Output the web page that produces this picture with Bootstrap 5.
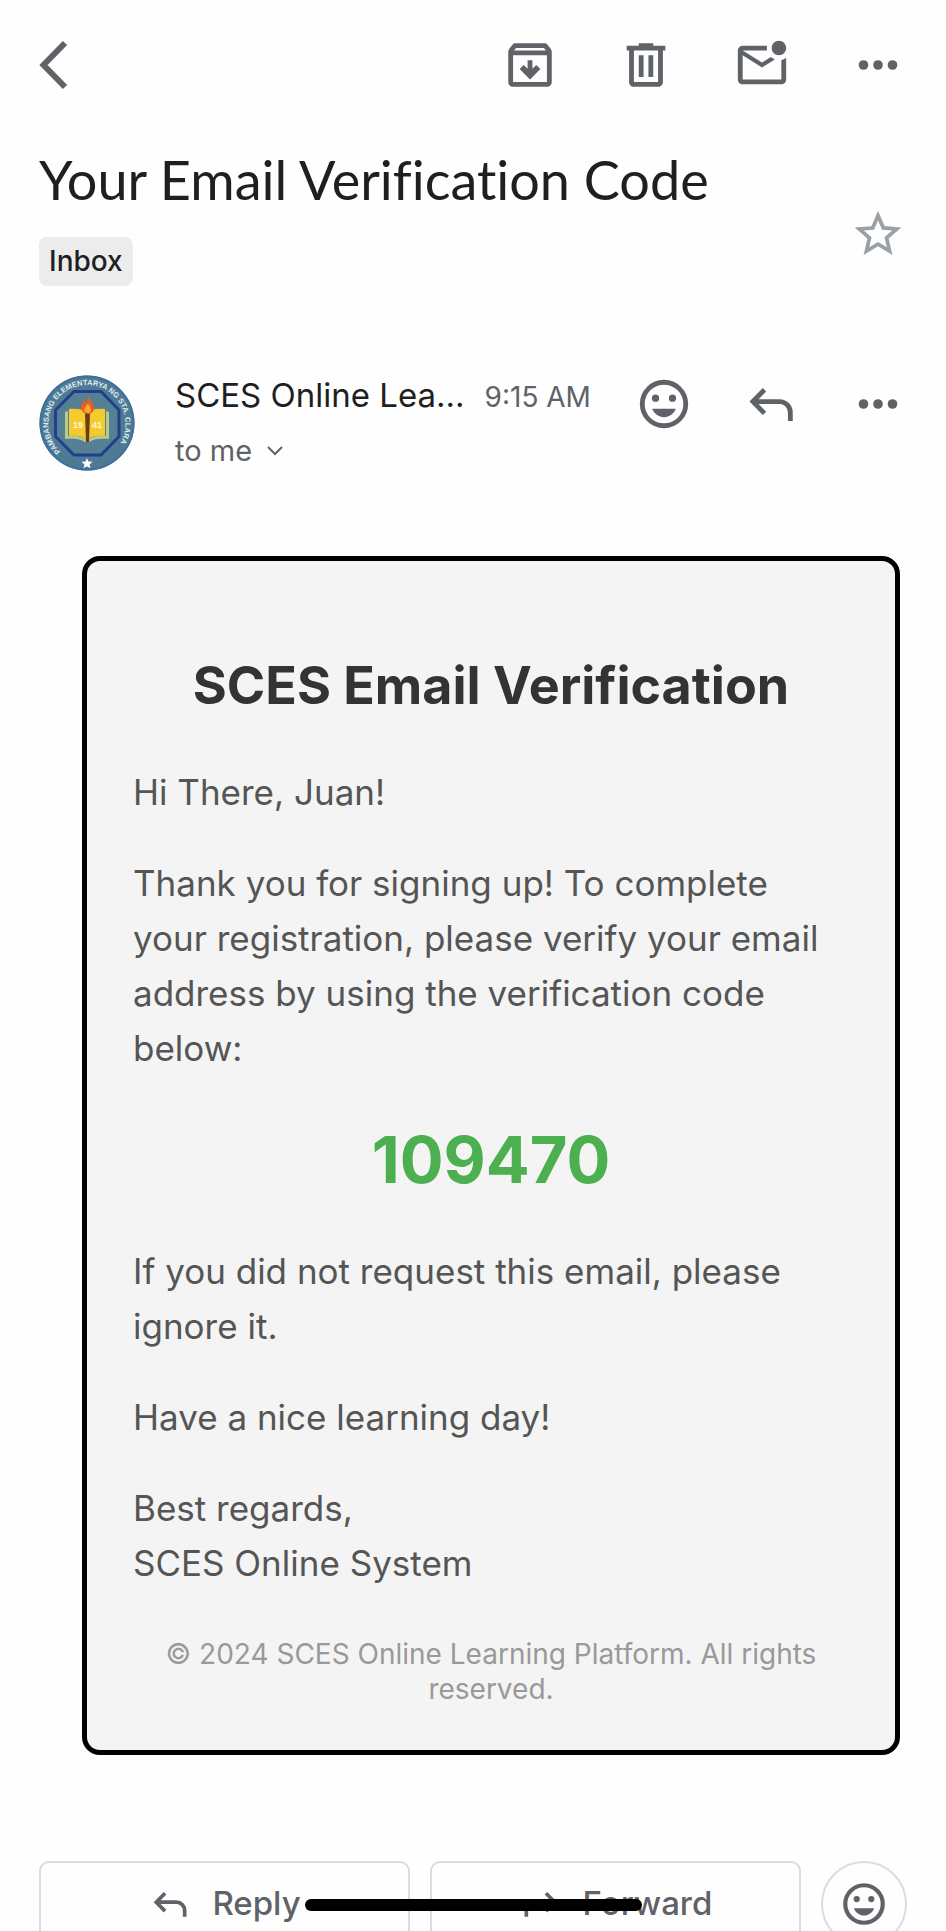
<!DOCTYPE html>
<html lang="en">
<head>
<meta charset="utf-8">
<meta name="viewport" content="width=device-width, initial-scale=1">
<title>Your Email Verification Code</title>
<link href="https://cdn.jsdelivr.net/npm/bootstrap@5.3.0/dist/css/bootstrap.min.css" rel="stylesheet">
<style>
  body { font-family: Inter, "Liberation Sans", sans-serif; background: #fefefe; color: #1f1f1f; }
  .mail-screen { padding: 36px 39px 0; }
  .icon-btn { border: 0; padding: 0; background: none; color: #5f6368; line-height: 0; flex: none; }
  .tool-gap { gap: 58px; }
  .reply-gap { gap: 49px; }
  .subject-row { margin-top: 54px; }
  .subject { font-family: Lato, "Liberation Sans", sans-serif; font-size: 54px; line-height: 64px; font-weight: 400; font-variant-ligatures: none; }
  .folder-tag { margin-top: 25px; padding: 0 10px; height: 49px; line-height: 49px; font-size: 28px; font-weight: 500; background: #ececec; border-radius: 8px; color: #1f1f1f; }
  .star-btn { color: #9aa0a6; margin-bottom: 24px; }
  .sender-row { margin-top: 89px; }
  .sender-text { margin-left: 40px; line-height: 40px; }
  .sender-name { font-size: 33px; }
  .sent-time { font-size: 28px; color: #5f6368; margin-left: 20px; }
  .recipient { border: 0; padding: 0; background: none; margin-top: 14px; font-size: 29px; line-height: 40px; color: #5f6368; gap: 14px; }
  .letter { margin: 85px 7px 0 43px; padding: 84px 46px 43px; border: 5px solid #000; border-radius: 18px; background: #f4f4f4; color: #555; font-size: 35px; line-height: 55px; }
  .letter p { margin-bottom: 36px; }
  .letter h2 { font-size: 52px; line-height: 82px; font-weight: 700; color: #333; margin-bottom: 38px; text-align: center; }
  .letter .code { font-size: 65px; line-height: 96px; font-weight: 700; color: #4caf50; text-align: center; }
  .letter .legal { font-size: 28px; line-height: 35px; color: #999; text-align: center; margin: 46px 0 0; }
  .action-row { margin-top: 106px; gap: 20px; }
  .action-btn { height: 86px; border: 2px solid #dadce0; border-radius: 10px; background: none; color: #5f6368; font-size: 33px; font-weight: 500; gap: 20px; padding: 0; }
  .round-btn { width: 86px; border-radius: 50%; flex: none; }
  .home-bar { left: 50%; margin-left: -168px; bottom: 20px; width: 337px; height: 12px; border-radius: 6px; background: #000; }
</style>
</head>
<body>
<svg class="d-none" aria-hidden="true">
  <symbol id="i-dots" viewBox="0 0 24 24"><g fill="currentColor"><circle cx="6" cy="12" r="2"/><circle cx="12" cy="12" r="2"/><circle cx="18" cy="12" r="2"/></g></symbol>
  <symbol id="i-smile" viewBox="0 0 24 24"><circle cx="12" cy="12" r="9" fill="none" stroke="currentColor" stroke-width="2"/><g fill="currentColor"><circle cx="8.5" cy="9.6" r="1.5"/><circle cx="15.5" cy="9.6" r="1.5"/><path d="M7.1 14h9.8c-.8 2.04-2.7 3.5-4.9 3.5s-4.1-1.46-4.9-3.5z"/></g></symbol>
  <symbol id="i-reply" viewBox="0 0 24 24"><path d="M9.300 6.100 4.500 11 9.300 15.900M4.500 11h11a4.500 4.500 0 0 1 4.500 4.500V19" fill="none" stroke="currentColor" stroke-width="2"/></symbol>
</svg>
<div class="mail-screen vh-100 overflow-hidden position-relative">
  <header class="d-flex align-items-center tool-gap">
    <button class="icon-btn me-auto" aria-label="Back"><svg width="30" height="58" viewBox="0 0 30 58" fill="none" stroke="currentColor" stroke-width="6"><path d="M26 7 4.500 29 26 51"/></svg></button>
    <button class="icon-btn" aria-label="Archive"><svg width="58" height="58" viewBox="0 0 24 24" fill="currentColor"><path d="M20.540 5.230l-1.390-1.680C18.880 3.210 18.470 3 18 3H6c-.47 0-.88.21-1.160.55L3.460 5.230C3.170 5.570 3 6.020 3 6.500V19c0 1.100.9 2 2 2h14c1.100 0 2-.9 2-2V6.500c0-.48-.17-.93-.46-1.270zM6.240 5h11.520l.83 1H5.420l.82-1zM5 19V8h14v11H5z"/><path d="M8.200 13.600l-.5.100 4.300 4.300 4.300-4.300-1.700-1.700-1.600 1.600V10h-2v3.600l-1.600-1.600-1.700 1.700z"/></svg></button>
    <button class="icon-btn" aria-label="Delete"><svg width="58" height="58" viewBox="0 0 24 24" fill="currentColor"><path d="M15 4V3H9v1H4v2h1v13c0 1.100.9 2 2 2h10c1.100 0 2-.9 2-2V6h1V4h-5zm2 15H7V6h10v13zM9 8h2v9H9zm4 0h2v9h-2z"/></svg></button>
    <button class="icon-btn" aria-label="Mark as unread"><svg width="58" height="58" viewBox="0 0 24 24" fill="currentColor"><path d="M22 8.980V18c0 1.100-.9 2-2 2H4c-1.100 0-2-.9-2-2V6c0-1.100.9-2 2-2h10.100c-.06.32-.1.66-.1 1s.04.68.1 1H4l8 5 3.670-2.290c.47.43 1.020.76 1.630.98L12 13 4 8v10h16V9.900c.74-.15 1.420-.48 2-.92zM16 5c0 1.660 1.340 3 3 3s3-1.340 3-3-1.340-3-3-3-3 1.340-3 3z"/></svg></button>
    <button class="icon-btn" aria-label="More"><svg width="58" height="58"><use href="#i-dots"/></svg></button>
  </header>

  <div class="subject-row d-flex justify-content-between">
    <div>
      <h1 class="subject mb-0">Your Email Verification Code</h1>
      <span class="folder-tag d-inline-block">Inbox</span>
    </div>
    <button class="icon-btn star-btn align-self-end" aria-label="Star"><svg width="58" height="56" viewBox="0 0 24 24" fill="currentColor"><path d="M22 9.240l-7.190-.62L12 2 9.190 8.630 2 9.240l5.460 4.730L5.820 21 12 17.270 18.180 21l-1.630-7.030L22 9.240zM12 15.400l-3.760 2.270 1-4.280-3.320-2.880 4.380-.38L12 6.100l1.710 4.040 4.380.38-3.320 2.880 1 4.280L12 15.400z"/></svg></button>
  </div>

  <div class="sender-row d-flex align-items-start">
    <svg class="flex-shrink-0" width="96" height="96" viewBox="0 0 96 96" role="img" aria-label="School seal">
      <defs><path id="ring" d="M21.500 76.500A38.500 38.500 0 1 1 74.500 76.500"/></defs>
      <circle cx="48" cy="48" r="47.500" fill="#4f7a94"/>
      <circle cx="48" cy="48" r="46.500" fill="none" stroke="#3f6f9c" stroke-width="2"/>
      <path d="M35 16.500h27L80 35v26.500L62 80H35L16.500 61.500V35z" fill="#557f92" stroke="#213f8c" stroke-width="3"/>
      <text font-family="Liberation Sans, sans-serif" font-size="7.500" font-weight="700" fill="#dfeaf2"><textPath href="#ring">PAMBANSANG ELEMENTARYA NG STA. CLARA</textPath></text>
      <path d="M26 37l3-1v25c8-1 14 0 19 4 5-4 11-5 19-4V36l3 1v27c-9-1-16 0-20 3h-4c-4-3-11-4-20-3z" fill="#b9c98c"/>
      <path d="M30 34c7-1 13 0 18 3 5-3 11-4 18-3v27c-8-1-14 0-18 4-4-4-10-5-18-4z" fill="#f3cb2c"/>
      <path d="M46 38h5l-1 29h-3z" fill="#6d3b16"/>
      <path d="M48 19c1 5 7 8 7 14 0 4-3 6-6 6-4 0-7-3-7-7 0-3 2-4 2-7 2 1 3 3 3 4 2-3 2-6 1-10z" fill="#e8601f"/>
      <path d="M49 28c1 3 3 4 3 7 0 2-2 3-3 3-2 0-4-1-4-3s3-4 4-7z" fill="#f9a63a"/>
      <g font-family="Liberation Sans, sans-serif" font-size="9" font-weight="700" fill="#fff8d8"><text x="34" y="53">19</text><text x="53" y="53">41</text></g>
      <path d="M48 83l1.500 3.500 4 .3-3 2.600 1 3.800-3.500-2-3.500 2 1-3.800-3-2.600 4-.3z" fill="#fff"/>
    </svg>
    <div class="sender-text flex-grow-1">
      <div class="d-flex align-items-baseline text-nowrap"><span class="sender-name">SCES Online Lea...</span><span class="sent-time">9:15 AM</span></div>
      <button class="recipient d-flex align-items-center">to me <svg width="18" height="12" viewBox="0 0 18 12" fill="none" stroke="currentColor" stroke-width="2"><path d="M2 2l7 7 7-7"/></svg></button>
    </div>
    <div class="d-flex reply-gap">
      <button class="icon-btn" aria-label="React"><svg width="58" height="58"><use href="#i-smile"/></svg></button>
      <button class="icon-btn" aria-label="Reply"><svg width="58" height="58"><use href="#i-reply"/></svg></button>
      <button class="icon-btn" aria-label="More"><svg width="58" height="58"><use href="#i-dots"/></svg></button>
    </div>
  </div>

  <article class="letter">
    <h2>SCES Email Verification</h2>
    <p>Hi There, Juan!</p>
    <p>Thank you for signing up! To complete your registration, please verify your email address by using the verification code below:</p>
    <p class="code">109470</p>
    <p>If you did not request this email, please ignore it.</p>
    <p>Have a nice learning day!</p>
    <p>Best regards,<br>SCES Online System</p>
    <p class="legal">© 2024 SCES Online Learning Platform. All rights reserved.</p>
  </article>

  <footer class="action-row d-flex">
    <button class="action-btn d-flex flex-fill w-50 align-items-center justify-content-center"><svg width="44" height="44"><use href="#i-reply"/></svg>Reply</button>
    <button class="action-btn d-flex flex-fill w-50 align-items-center justify-content-center"><svg width="44" height="44"><use href="#i-reply" transform="matrix(-1 0 0 1 44 0)"/></svg>Forward</button>
    <button class="action-btn round-btn d-flex align-items-center justify-content-center" aria-label="React"><svg width="50" height="50"><use href="#i-smile"/></svg></button>
  </footer>
  <div class="home-bar position-absolute"></div>
</div>
<script src="https://cdn.jsdelivr.net/npm/bootstrap@5.3.0/dist/js/bootstrap.bundle.min.js"></script>
</body>
</html>
